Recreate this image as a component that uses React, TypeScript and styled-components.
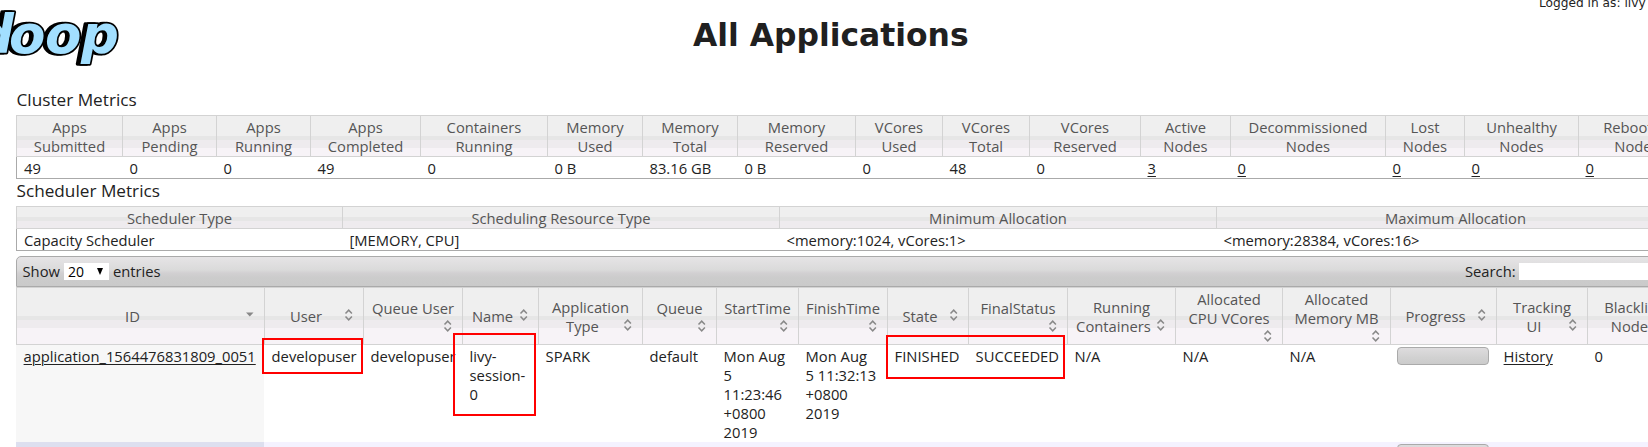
import React from 'react';
import styled, { createGlobalStyle, css } from 'styled-components';

const GlobalStyle = createGlobalStyle`
  html, body { margin: 0; background: #fff; overflow: hidden; }
  * { box-sizing: border-box; }
`;

const Page = styled.div`
  position: relative;
  height: 447px;
  overflow: hidden;
  color: #222;
  font: 14.75px/19px 'Open Sans', 'Noto Sans', sans-serif;
`;

const Header = styled.header`
  display: flex;
  align-items: flex-start;
  height: 90px;
`;

const Logo = styled.svg`
  flex: none;
  width: 150px;
  height: 80px;
  overflow: hidden;
`;

const Wordmark = styled.text`
  font: italic bold 53px 'DejaVu Sans', sans-serif;
  fill: #a2dfff;
  stroke: #000;
  stroke-width: 3.5px;
  stroke-linejoin: round;
  paint-order: stroke;
  filter: drop-shadow(-3px 0 0 #000);
`;

const Title = styled.h1`
  margin: 15px 0 0;
  width: 1362px;
  padding-left: 543px;
  font: bold 31.4px/40px 'DejaVu Sans', sans-serif;
  color: #202020;
  white-space: nowrap;
`;

const Login = styled.div`
  margin: -5px 0 0 27px;
  font: 12.2px/16px 'DejaVu Sans', sans-serif;
  white-space: nowrap;
`;

const Content = styled.main`
  width: 1678px;
  margin-left: 16px;
`;

const Heading = styled.h2<{ $height: number; $top?: number }>`
  margin: 0;
  height: ${(p) => p.$height}px;
  padding: ${(p) => p.$top ?? 0}px 0 0 0.5px;
  font-size: 17.2px;
  font-weight: 400;
  line-height: 20px;
`;

const headerFill = css`
  background: linear-gradient(
    #efefef calc(50% + 0px),
    #e6e6e6 calc(50% + 0px) calc(50% + 4px),
    #eeebee calc(50% + 4px) calc(50% + 12px),
    #f7f3f7 calc(50% + 12px)
  );
`;

const Metrics = styled.section<{ $columns: string }>`
  display: grid;
  grid-template-columns: ${(p) => p.$columns};
  border-bottom: 1px solid #aaa;
`;

const MetricHead = styled.div`
  ${headerFill}
  padding-top: 2px;
  border: solid #d3d3d3;
  border-width: 1px 0 1px 1px;
  color: #555;
  text-align: center;
  white-space: pre-line;
`;

const MetricValue = styled.div<{ $first?: boolean }>`
  height: 21px;
  padding: 2px 0 0 ${(p) => (p.$first ? 7 : 7.5)}px;
  border-left: ${(p) => (p.$first ? '1px solid #aaa' : '0')};
  white-space: nowrap;
`;

const Link = styled.a`
  color: #222;
  text-decoration: underline;
  text-underline-offset: 2px;
  text-decoration-thickness: 1px;
`;

const Toolbar = styled.div`
  display: flex;
  align-items: center;
  height: 31px;
  margin-top: 5px;
  padding-left: 5.5px;
  border: 1px solid #aaa;
  border-radius: 5px 5px 0 0;
  background: linear-gradient(#e6e4e6, #dadada 45%, #d2d0d2 55%, #cccccc 70%, #cacaca);
`;

const PageSize = styled.div`
  display: flex;
  align-items: center;
  justify-content: space-between;
  width: 45px;
  height: 17px;
  margin: 0 4px;
  padding: 0 6px 0 4px;
  background: #fff;
  color: #000;
  font-size: 14px;
`;

const Caret = styled.svg`
  width: 6px;
  height: 7px;
`;

const Search = styled.label`
  display: flex;
  align-items: center;
  width: 228px;
  margin-left: auto;
`;

const SearchField = styled.span`
  flex: 1;
  height: 17px;
  margin-left: 3px;
  background: #fff;
`;

const Row = styled.div`
  display: grid;
  grid-template-columns: 248px 99px 99px 76px 104px 74px 82px 89px 81px 99px 108px 107px 108px 106px 91px 107px;
`;

const AppHead = styled.div`
  ${headerFill}
  display: flex;
  flex-direction: column;
  justify-content: center;
  height: 58px;
  padding: 1px 6.5px 0;
  border: solid #d3d3d3;
  border-width: 1px 0 1px 1px;
  color: #555;
  text-align: center;
  white-space: nowrap;
`;

const LastLine = styled.div<{ $iconOnly?: boolean }>`
  display: flex;
  justify-content: flex-end;
  height: ${(p) => (p.$iconOnly ? 16 : 19)}px;
`;

const Label = styled.span`
  flex: 1;
`;

const SortIcon = styled.svg`
  flex: none;
  width: 16px;
  height: 16px;
  fill: none;
  stroke: #888;
  stroke-width: 1.5;
`;

const AppRow = styled(Row)<{ $even?: boolean }>`
  height: 97px;
  background: ${(p) => (p.$even ? '#f4f2ff' : '#fff')};
`;

const AppCell = styled.div<{ $sorted?: 'odd' | 'even' }>`
  padding: 2px 0 0 7.6px;
  white-space: pre-line;
  background: ${(p) => (p.$sorted === 'odd' ? '#f7f7f7' : p.$sorted === 'even' ? '#dddfef' : 'none')};
`;

const Progress = styled.div`
  width: 92px;
  height: 18px;
  margin-left: -0.6px;
  border: 1px solid #aaa;
  border-radius: 4px;
  background: linear-gradient(#dedcde, #d2d2d2 55%, #cbcbcb);
`;

const Highlight = styled.div<{ $x: number; $y: number; $w: number; $h: number }>`
  position: absolute;
  left: ${(p) => p.$x}px;
  top: ${(p) => p.$y}px;
  width: ${(p) => p.$w}px;
  height: ${(p) => p.$h}px;
  border: 2px solid #f00;
`;

const clusterMetrics = [
  ['Apps\nSubmitted', '49'],
  ['Apps\nPending', '0'],
  ['Apps\nRunning', '0'],
  ['Apps\nCompleted', '49'],
  ['Containers\nRunning', '0'],
  ['Memory\nUsed', '0 B'],
  ['Memory\nTotal', '83.16 GB'],
  ['Memory\nReserved', '0 B'],
  ['VCores\nUsed', '0'],
  ['VCores\nTotal', '48'],
  ['VCores\nReserved', '0'],
  ['Active\nNodes', '3', true],
  ['Decommissioned\nNodes', '0', true],
  ['Lost\nNodes', '0', true],
  ['Unhealthy\nNodes', '0', true],
  ['Rebooted\nNodes', '0', true],
] as [string, string, boolean?][];

const schedulerMetrics = [
  ['Scheduler Type', 'Capacity Scheduler'],
  ['Scheduling Resource Type', '[MEMORY, CPU]'],
  ['Minimum Allocation', '<memory:1024, vCores:1>'],
  ['Maximum Allocation', '<memory:28384, vCores:16>'],
] as [string, string, boolean?][];

// An empty last line leaves the sort icon on a line of its own.
const appColumns: string[][] = [
  ['ID'],
  ['User'],
  ['Queue User', ''],
  ['Name'],
  ['Application', 'Type'],
  ['Queue', ''],
  ['StartTime', ''],
  ['FinishTime', ''],
  ['State'],
  ['FinalStatus', ''],
  ['Running', 'Containers'],
  ['Allocated', 'CPU VCores', ''],
  ['Allocated', 'Memory MB', ''],
  ['Progress'],
  ['Tracking', 'UI'],
  ['Blacklisted', 'Nodes'],
];

function MetricsTable({ columns, items }: { columns: string; items: [string, string, boolean?][] }) {
  return (
    <Metrics $columns={columns}>
      {items.map(([label]) => (
        <MetricHead key={label}>{label}</MetricHead>
      ))}
      {items.map(([label, value, linked], i) => (
        <MetricValue key={label} $first={i === 0}>
          {linked ? <Link>{value}</Link> : value}
        </MetricValue>
      ))}
    </Metrics>
  );
}

function ColumnHeader({ lines, sorted }: { lines: string[]; sorted: boolean }) {
  const last = lines[lines.length - 1];
  return (
    <AppHead>
      {lines.slice(0, -1).map((line) => (
        <div key={line}>{line}</div>
      ))}
      <LastLine $iconOnly={!last}>
        {last && <Label>{last}</Label>}
        <SortIcon viewBox="0 0 16 16">
          {sorted ? (
            <path d="M4 5.5h7.5L7.75 9.5z" fill="#888" stroke="none" />
          ) : (
            <path d="M4.5 6.5 7.7 3.2l3.2 3.3M4.5 9.5l3.2 3.3 3.2-3.3" />
          )}
        </SortIcon>
      </LastLine>
    </AppHead>
  );
}

export default function App() {
  return (
    <Page>
      <GlobalStyle />
      <Header>
        <Logo viewBox="0 0 150 80">
          <Wordmark x="-24 9 45 81" y="52.5">
            doop
          </Wordmark>
        </Logo>
        <Title>All Applications</Title>
        <Login>Logged in as: livy</Login>
      </Header>
      <Content>
        <Heading $height={25}>Cluster Metrics</Heading>
        <MetricsTable
          columns="106px 94px 94px 110px 127px 95px 95px 118px 87px 87px 111px 90px 155px 79px 114px 116px"
          items={clusterMetrics}
        />
        <Heading $height={27} $top={2}>
          Scheduler Metrics
        </Heading>
        <MetricsTable columns="326px 437px 437px 478px" items={schedulerMetrics} />
        <Toolbar>
          Show
          <PageSize>
            20
            <Caret viewBox="0 0 6 7">
              <path d="M0 0h6L3 7z" />
            </Caret>
          </PageSize>
          entries
          <Search>
            Search:
            <SearchField />
          </Search>
        </Toolbar>
        <Row>
          {appColumns.map((lines, i) => (
            <ColumnHeader key={i} lines={lines} sorted={i === 0} />
          ))}
        </Row>
        <AppRow>
          <AppCell $sorted="odd">
            <Link>application_1564476831809_0051</Link>
          </AppCell>
          <AppCell>developuser</AppCell>
          <AppCell>developuser</AppCell>
          <AppCell>{'livy-\nsession-\n0'}</AppCell>
          <AppCell>SPARK</AppCell>
          <AppCell>default</AppCell>
          <AppCell>{'Mon Aug\n5\n11:23:46\n+0800\n2019'}</AppCell>
          <AppCell>{'Mon Aug\n5 11:32:13\n+0800\n2019'}</AppCell>
          <AppCell>FINISHED</AppCell>
          <AppCell>SUCCEEDED</AppCell>
          <AppCell>N/A</AppCell>
          <AppCell>N/A</AppCell>
          <AppCell>N/A</AppCell>
          <AppCell>
            <Progress />
          </AppCell>
          <AppCell>
            <Link>History</Link>
          </AppCell>
          <AppCell>0</AppCell>
        </AppRow>
        <AppRow $even>
          <AppCell $sorted="even" />
          {Array.from({ length: 12 }, (_, i) => (
            <AppCell key={i} />
          ))}
          <AppCell>
            <Progress />
          </AppCell>
        </AppRow>
      </Content>
      <Highlight $x={262} $y={338} $w={101} $h={36} />
      <Highlight $x={453} $y={333} $w={83} $h={83} />
      <Highlight $x={886} $y={335} $w={179} $h={44} />
    </Page>
  );
}
